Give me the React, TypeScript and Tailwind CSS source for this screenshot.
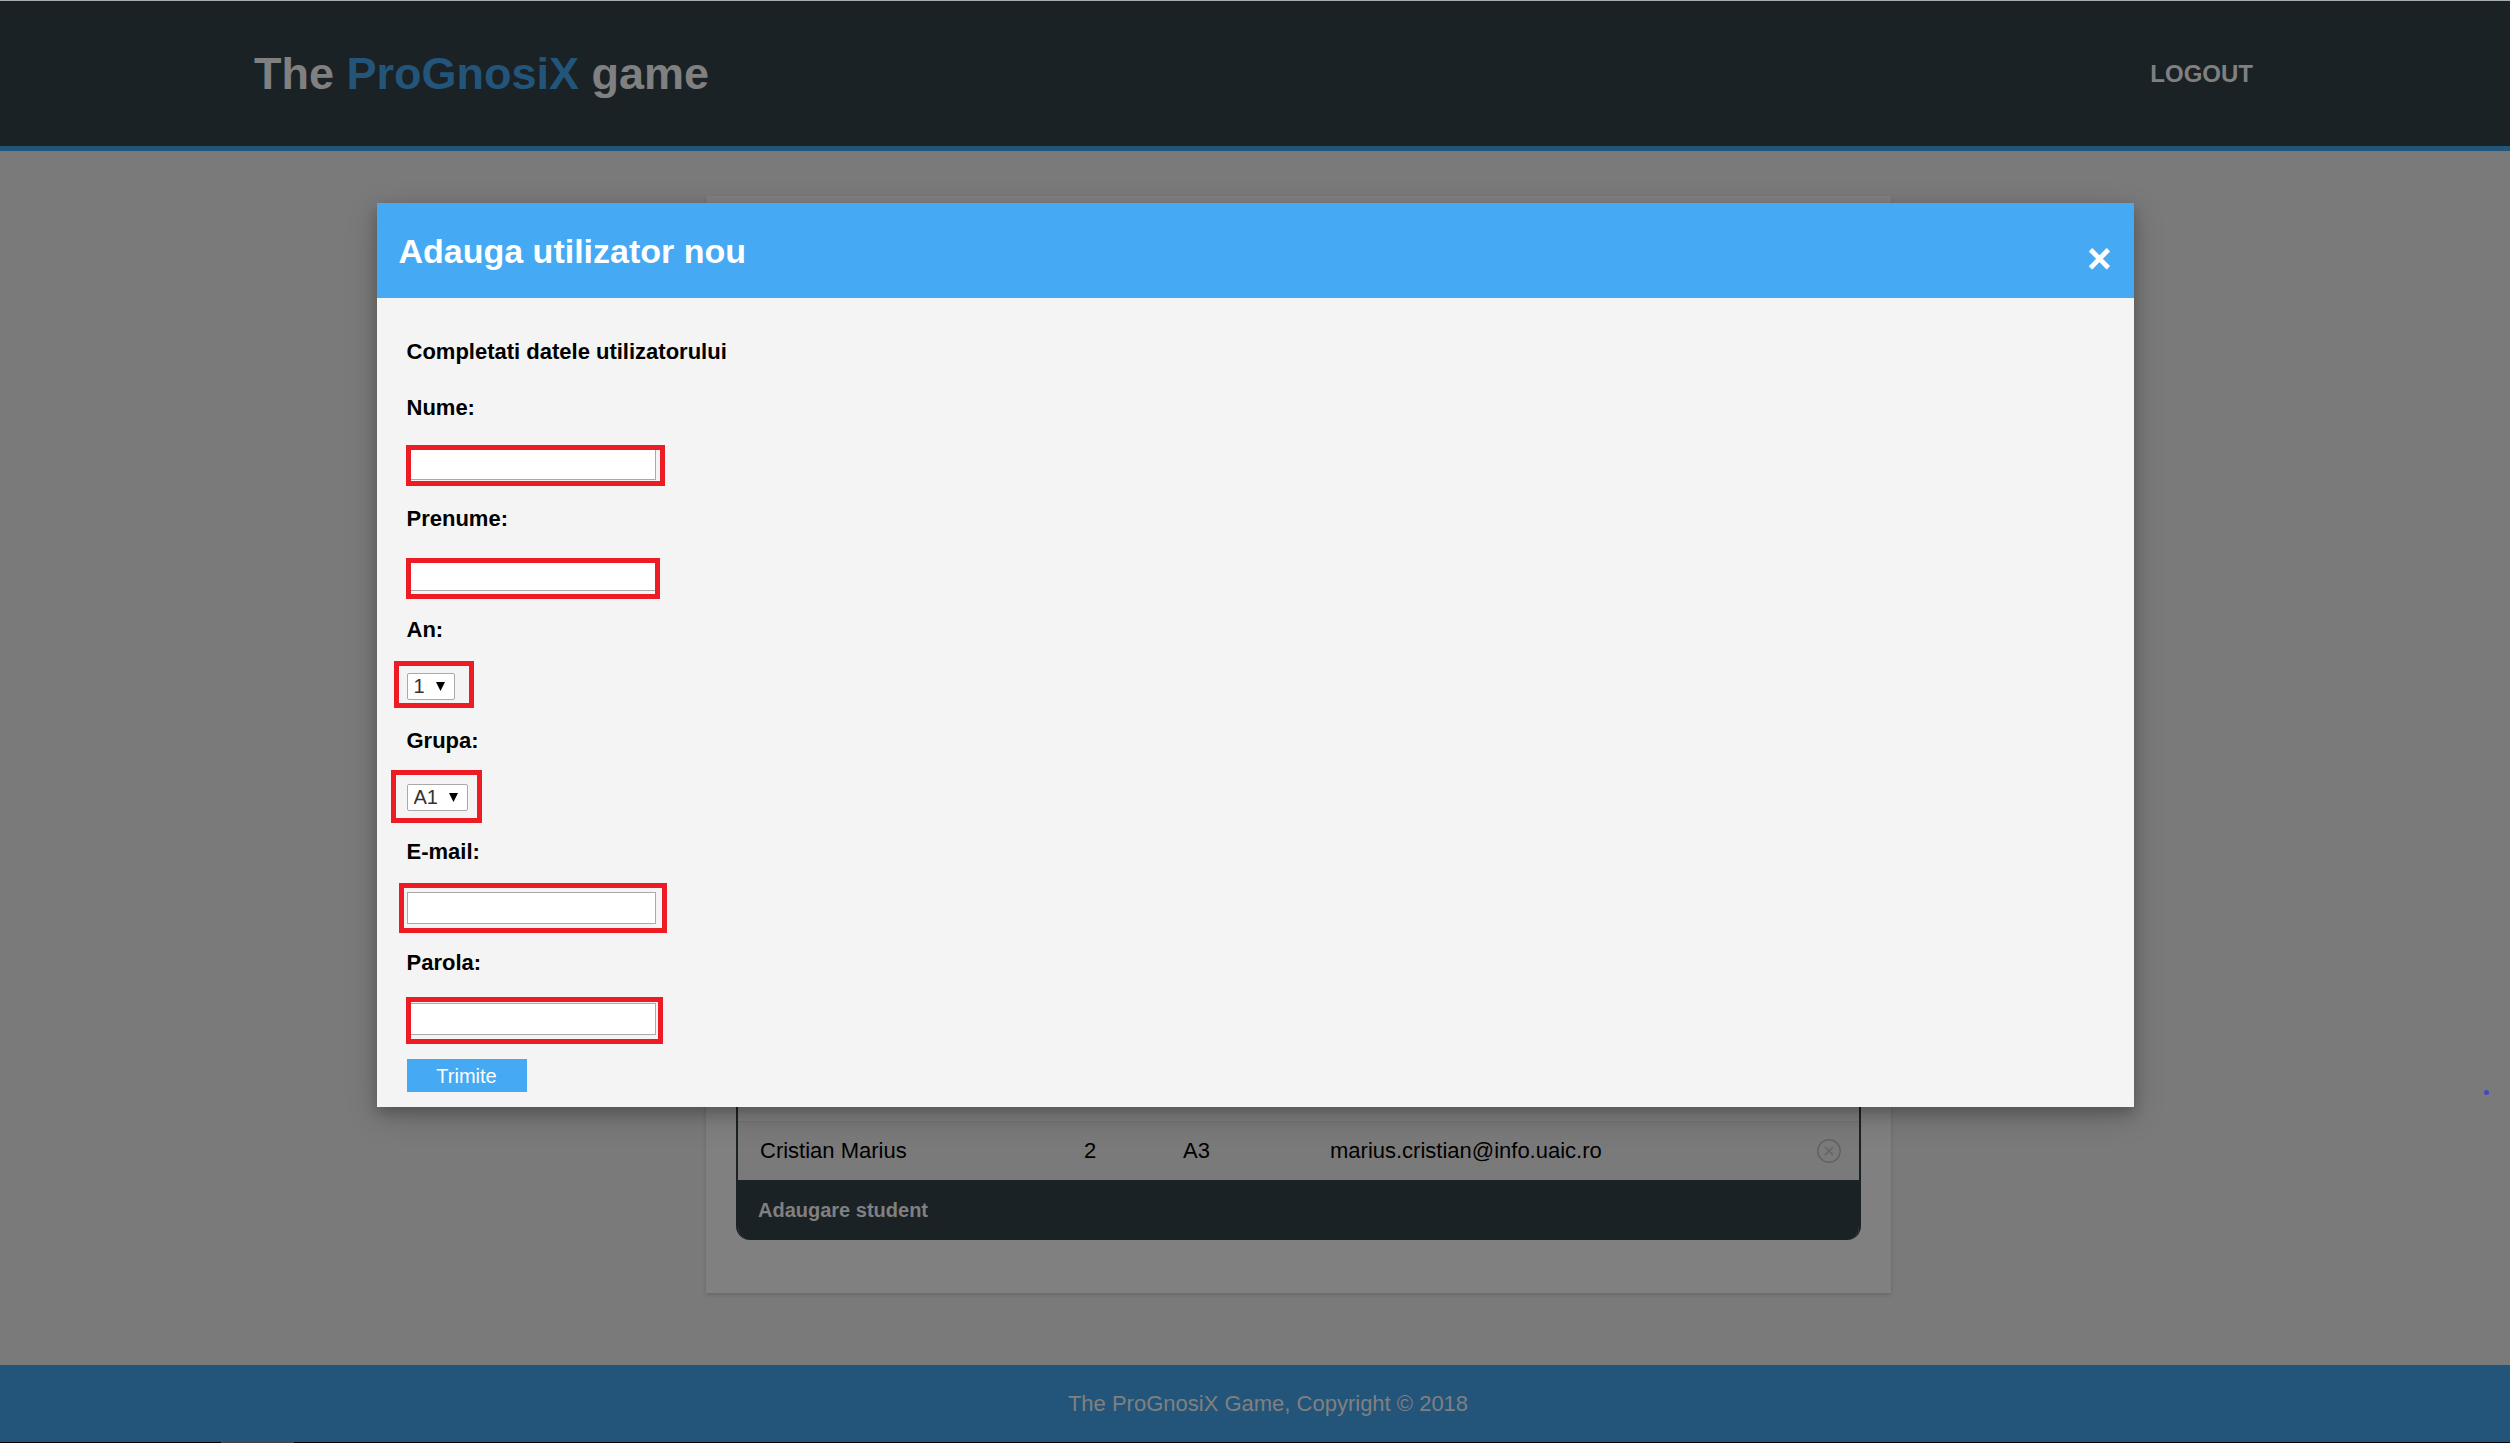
import type { ReactNode } from "react";

const controlBorder = "border border-[#a9a9a9] bg-white";

function Marker({ className }: { className: string }) {
  return (
    <span
      aria-hidden="true"
      className={`pointer-events-none absolute border-[5px] border-[#ed1c24] ${className}`}
    />
  );
}

function Field({ id, label, children }: { id: string; label: string; children: ReactNode }) {
  return (
    <div className="flex flex-col items-start gap-[26px]">
      <label htmlFor={id} className="text-[22px] leading-7 font-bold">
        {label}
      </label>
      <div className="relative flex h-8 items-center">{children}</div>
    </div>
  );
}

function TextField({ id, label, type, marker }: { id: string; label: string; type: string; marker: string }) {
  return (
    <Field id={id} label={label}>
      <input id={id} name={id} type={type} className={`h-8 w-[249px] px-1 text-xl ${controlBorder}`} />
      <Marker className={marker} />
    </Field>
  );
}

function SelectField({
  id,
  label,
  options,
  width,
  marker,
}: {
  id: string;
  label: string;
  options: string[];
  width: string;
  marker: string;
}) {
  return (
    <Field id={id} label={label}>
      <select
        id={id}
        name={id}
        className={`h-[27px] appearance-none rounded-[2px] pl-1.5 text-xl leading-6 text-[#333] ${controlBorder} ${width}`}
      >
        {options.map((o) => (
          <option key={o}>{o}</option>
        ))}
      </select>
      <svg viewBox="0 0 9 9" className="pointer-events-none absolute right-2.5 h-[9px] w-[9px]" aria-hidden="true">
        <path d="M0 0H9L4.5 9Z" fill="#000" />
      </svg>
      <Marker className={marker} />
    </Field>
  );
}

function AddUserDialog() {
  return (
    <div
      role="dialog"
      aria-labelledby="dialog-title"
      className="w-[70%] bg-[#f4f4f4] text-black shadow-[0_6px_12px_rgba(0,0,0,0.2),0_9px_30px_rgba(0,0,0,0.19)]"
    >
      <div className="flex h-[95px] items-center justify-between bg-[#45a9f3] px-[22px] text-white">
        <h2 id="dialog-title" className="text-[34px] leading-10 font-bold">
          Adauga utilizator nou
        </h2>
        <button type="button" aria-label="Close" className="pt-4 text-[42px] leading-10 font-bold">
          ×
        </button>
      </div>
      <form className="flex flex-col items-start px-[30px] pt-10 pb-[15px]">
        <p className="mb-7 text-[22px] leading-7 font-bold">Completati datele utilizatorului</p>
        <div className="mb-6 flex flex-col gap-[25px]">
          <TextField id="nume" label="Nume:" type="text" marker="-left-px -top-[3px] h-[41px] w-[259px]" />
          <TextField id="prenume" label="Prenume:" type="text" marker="-left-px -top-px h-[41px] w-[254px]" />
          <SelectField
            id="an"
            label="An:"
            options={["1", "2", "3"]}
            width="w-12"
            marker="-left-[13px] -top-[9px] h-[47px] w-20"
          />
          <SelectField
            id="grupa"
            label="Grupa:"
            options={["A1", "A2", "A3"]}
            width="w-[61px]"
            marker="-left-4 -top-[11px] h-[53px] w-[91px]"
          />
          <TextField id="email" label="E-mail:" type="email" marker="-left-2 -top-[9px] h-[50px] w-[268px]" />
          <TextField id="parola" label="Parola:" type="password" marker="-left-px -top-1.5 h-[47px] w-[257px]" />
        </div>
        <button type="button" className="h-[33px] w-[120px] bg-[#45a9f3] text-xl leading-8 text-white">
          Trimite
        </button>
      </form>
    </div>
  );
}

export default function App() {
  return (
    <div className="relative flex min-h-screen flex-col border-t border-b border-t-[#a9adad] border-b-black bg-[#7a7a7a] font-['Liberation_Sans',Arial,sans-serif] text-[22px] leading-7">
      <header className="border-b-[5px] border-[#23557a] bg-[#1b2225] text-[#808080]">
        <div className="mx-auto flex h-[145px] w-[80%] items-center justify-between pr-1.5 pl-[3px]">
          <h1 className="text-[45px] leading-[52px] font-bold">
            The <span className="text-[#23557a]">ProGnosiX</span> game
          </h1>
          <a href="#logout" className="text-2xl font-bold">
            LOGOUT
          </a>
        </div>
      </header>

      <main className="flex flex-1 flex-col pt-[45px] pb-[72px] pl-[706px]">
        <section className="flex w-[1185px] max-w-full flex-1 flex-col bg-[#808080] px-[30px] pt-10 pb-[53px] shadow-[0_2px_4px_rgba(0,0,0,0.15)]">
          <div className="flex flex-1 flex-col justify-end overflow-hidden rounded-b-[14px] border-x-2 border-[#1b2225]">
            <table className="w-full table-fixed text-black">
              <colgroup>
                <col className="w-[325px]" />
                <col className="w-[99px]" />
                <col className="w-[147px]" />
                <col />
                <col className="w-[60px]" />
              </colgroup>
              <tbody>
                <tr className="h-[59px] border-t border-[#737373] bg-[#7a7a7a]">
                  <td className="pl-[22px]">Cristian Marius</td>
                  <td className="pl-[21px]">2</td>
                  <td className="pl-[21px]">A3</td>
                  <td className="pl-[21px]">marius.cristian@info.uaic.ro</td>
                  <td>
                    <button type="button" aria-label="Delete Cristian Marius" className="ml-[18px] block">
                      <svg viewBox="0 0 24 24" className="h-6 w-6" fill="none" stroke="#626262" strokeWidth="1.4">
                        <circle cx="12" cy="12" r="11.2" />
                        <path d="M8 8L16 16M16 8L8 16" />
                      </svg>
                    </button>
                  </td>
                </tr>
              </tbody>
            </table>
            <button
              type="button"
              className="h-[60px] w-full bg-[#1b2225] pl-5 text-left text-xl font-bold text-[#808080]"
            >
              Adaugare student
            </button>
          </div>
        </section>
      </main>

      <footer className="flex h-[77px] items-center justify-center bg-[#23557a] pl-[26px] text-[#808080]">
        <p>The ProGnosiX Game, Copyright © 2018</p>
      </footer>

      <span className="absolute -bottom-px left-[221px] h-px w-[73px] bg-[#444]" />
      <span className="absolute top-[1089px] right-[21px] h-[5px] w-[5px] rounded-full bg-[#4444cc]" />

      <div className="absolute inset-x-0 top-[202px] flex justify-center">
        <AddUserDialog />
      </div>
    </div>
  );
}
